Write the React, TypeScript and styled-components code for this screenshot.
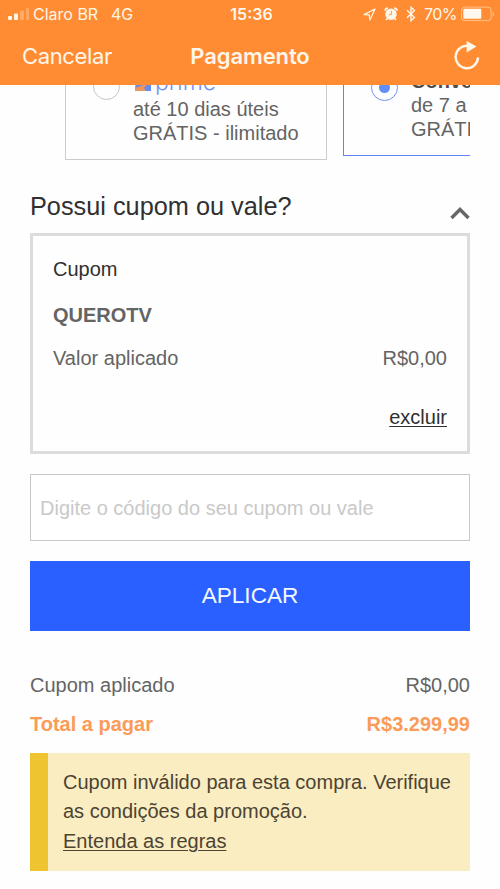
import React from "react";
import styled, { createGlobalStyle } from "styled-components";

const GlobalStyle = createGlobalStyle`
  * { box-sizing: border-box; }
  body {
    margin: 0;
    background: #fff;
    font-family: "Liberation Sans", Arial, sans-serif;
    font-size: 20px;
    color: #646464;
  }
`;

const Screen = styled.div`
  width: 500px;
  height: 889px;
  overflow: hidden;
  background: #fefefe;
`;

const Header = styled.header`
  height: 85px;
  background: #ff8c32;
  color: #fff6ea;
  font-family: Inter, sans-serif;
`;

const StatusBar = styled.div`
  height: 28px;
  padding: 0 5px 0 8px;
  display: grid;
  grid-template-columns: 1fr 44px 1fr;
  align-items: center;
  font-size: 16px;
  line-height: 28px;
`;

const Carrier = styled.div`
  display: flex;
  align-items: center;
`;

const CarrierName = styled.span`
  width: 65px;
  margin-left: 4px;
  white-space: nowrap;
`;

const Network = styled.span`
  margin-left: 13px;
`;

const Clock = styled.span`
  font-weight: 600;
  text-align: center;
  white-space: nowrap;
`;

const Indicators = styled.div`
  display: flex;
  align-items: center;
  justify-content: flex-end;
`;

const StatusIcons = styled.div`
  display: flex;
  align-items: center;
  gap: 8px;
`;

const Percent = styled.span`
  margin: 0 4px 0 8px;
  letter-spacing: -0.5px;
`;

const NavBar = styled.nav`
  height: 57px;
  padding: 0 20px 0 22px;
  display: grid;
  grid-template-columns: 1fr auto 1fr;
  align-items: center;
`;

const CancelButton = styled.button`
  padding: 0 0 2px;
  border: 0;
  background: none;
  color: inherit;
  font: 400 22px/28px Inter, sans-serif;
  letter-spacing: -0.35px;
  text-align: left;
`;

const Title = styled.h1`
  margin: 0 2px 0 0;
  padding-bottom: 2px;
  font-size: 22px;
  line-height: 28px;
  font-weight: 600;
  letter-spacing: -0.1px;
`;

const ReloadButton = styled.button`
  justify-self: end;
  display: flex;
  padding: 0 0 3px;
  border: 0;
  background: none;
`;

const Content = styled.main`
  padding: 0 30px;
`;

const ShippingRow = styled.div`
  height: 75px;
  padding-left: 35px;
  display: flex;
  align-items: flex-end;
  gap: 16px;
  overflow: hidden;
`;

const ShippingCard = styled.div<{ $selected?: boolean }>`
  flex: 0 0 262px;
  height: 120px;
  margin-bottom: ${(p) => (p.$selected ? 4 : 0)}px;
  padding: ${(p) => (p.$selected ? 27 : 26)}px 0 0 27px;
  display: flex;
  align-items: flex-start;
  gap: 13px;
  border: 1px solid ${(p) => (p.$selected ? "#5f86f5" : "#cbcbcb")};
`;

const Radio = styled.span<{ $selected?: boolean }>`
  flex: none;
  width: 27px;
  height: 27px;
  margin-top: ${(p) => (p.$selected ? 10 : 6)}px;
  display: flex;
  align-items: center;
  justify-content: center;
  border-radius: 50%;
  border: 1px solid ${(p) => (p.$selected ? "#7591ee" : "#c5c5c5")};
  &::after {
    content: "";
    width: 11px;
    height: 11px;
    border-radius: 50%;
    background: ${(p) => (p.$selected ? "#648ef7" : "transparent")};
  }
`;

const ShippingText = styled.div`
  line-height: 24px;
  white-space: nowrap;
`;

const PrimeName = styled.div`
  height: 30px;
  padding-left: 2px;
  display: flex;
  align-items: center;
  gap: 4px;
  color: #7590f0;
  font: 300 23px/30px Inter, sans-serif;
`;

const ServiceName = styled.div`
  height: 29px;
  font-weight: 700;
  color: #4d4d4d;
  line-height: 34px;
`;

const SectionHeader = styled.div`
  height: 73px;
  padding-top: 31px;
  display: flex;
  justify-content: space-between;
`;

const SectionTitle = styled.h2`
  margin: 0;
  font-size: 25.3px;
  line-height: 30px;
  font-weight: 400;
  color: #303030;
`;

const Chevron = styled.svg`
  margin-top: 15px;
`;

const CouponCard = styled.section`
  height: 221px;
  padding: 21px 20px 0;
  border: 3px solid #dcdcdc;
  line-height: 24px;
`;

const CouponLabel = styled.div`
  color: #303030;
`;

const CouponCode = styled.div`
  margin-top: 22px;
  font-weight: 700;
`;

const Row = styled.div<{ $top?: number; $total?: boolean }>`
  margin-top: ${(p) => p.$top ?? 0}px;
  display: flex;
  justify-content: space-between;
  line-height: 24px;
  font-weight: ${(p) => (p.$total ? 700 : 400)};
  color: ${(p) => (p.$total ? "#fa9b59" : "inherit")};
`;

const RemoveLink = styled.a`
  display: block;
  margin-top: 35px;
  text-align: right;
  color: #303030;
  text-decoration: underline;
  text-decoration-thickness: 1px;
  text-underline-offset: 2px;
`;

const CodeInput = styled.input`
  display: block;
  width: 100%;
  height: 67px;
  margin: 20px 0;
  padding: 2px 9px 0;
  border: 1px solid #c8c8c8;
  border-radius: 0;
  background: #fff;
  font: 400 20px "Liberation Sans", Arial, sans-serif;
  &::placeholder { color: #c9c9c9; opacity: 1; }
`;

const ApplyButton = styled.button`
  display: block;
  width: 100%;
  height: 70px;
  padding: 0;
  border: 0;
  background: #2a60ff;
  color: #f4f8ff;
  font: 400 22.6px "Liberation Sans", Arial, sans-serif;
`;

const Notice = styled.aside`
  height: 118px;
  margin-top: 17px;
  padding: 15px 0 0 15px;
  border-left: 18px solid #eec531;
  background: #faedc1;
  color: #4c4333;
  line-height: 29.4px;
  white-space: nowrap;
`;

const RulesLink = styled.a`
  color: inherit;
  text-decoration: underline;
  text-decoration-thickness: 1px;
  text-underline-offset: 2px;
`;

const SignalIcon = () => (
  <svg width="21" height="14" viewBox="0 0 21 14" fill="#fff6ea">
    <rect y="9" width="4" height="4" rx="1" />
    <rect x="6" y="6.5" width="4" height="6.5" rx="1" />
    <rect x="12" y="3.5" width="4" height="9.5" rx="1" opacity=".28" />
    <rect x="18" y="1" width="3" height="12" rx="1" opacity=".28" />
  </svg>
);

const LocationIcon = () => (
  <svg width="13" height="13" viewBox="0 0 13 13" fill="none" stroke="#fff6ea" strokeWidth="1.2" strokeLinejoin="round">
    <path d="M12 1 1 6.6l5.2.2.7 5.2z" />
  </svg>
);

const AlarmIcon = () => (
  <svg width="14" height="14" viewBox="0 0 14 14" fill="none">
    <circle cx="7" cy="7.3" r="5.7" fill="#fff6ea" />
    <path d="M1 3.7A3 3 0 0 1 4 1.2M13 3.7A3 3 0 0 0 10 1.2M3.3 11.5l-1.2 1.4M10.7 11.5l1.2 1.4" stroke="#fff6ea" strokeWidth="1.8" />
    <path d="M7.4 4v3.7H4.8" stroke="#ff9d50" strokeWidth="1" />
  </svg>
);

const BluetoothIcon = () => (
  <svg width="10" height="16" viewBox="0 0 10 16" fill="none" stroke="#fff6ea" strokeWidth="1.4">
    <path d="m1 4.2 7.5 7.2L5 14.7V1.3l3.5 3.3L1 11.8" />
  </svg>
);

const BatteryIcon = () => (
  <svg width="34" height="16" viewBox="0 0 34 16" fill="none">
    <rect x=".6" y="1.1" width="29.5" height="13.5" rx="3" stroke="#ffc38c" strokeWidth="1" />
    <rect x="2.3" y="2.8" width="18" height="10" rx="1" fill="#fff8ee" />
    <path d="M31.7 5.5c1.8 1 1.8 4 0 5z" fill="#ffc38c" />
  </svg>
);

const ReloadIcon = () => (
  <svg width="26" height="30" viewBox="0 0 26 30" fill="none">
    <path d="M14.2 5.9A11.2 11.2 0 1 0 24 17.4" stroke="#fff6ea" strokeWidth="2.4" />
    <path d="M12.7 1 22.5 6.5l-9.8 6z" fill="#fff6ea" />
  </svg>
);

const PrimeIcon = () => (
  <svg width="16" height="17" viewBox="0 0 16 17">
    <path d="M1 0h15v17H0z" fill="#668bef" />
    <path d="M0 14 13 9.5 9 14l2 3H0z" fill="#ed965b" />
  </svg>
);

export default function App() {
  return (
    <Screen>
      <GlobalStyle />
      <Header>
        <StatusBar>
          <Carrier>
            <SignalIcon />
            <CarrierName>Claro BR</CarrierName>
            <Network>4G</Network>
          </Carrier>
          <Clock>15:36</Clock>
          <Indicators>
            <StatusIcons>
              <LocationIcon />
              <AlarmIcon />
              <BluetoothIcon />
            </StatusIcons>
            <Percent>70%</Percent>
            <BatteryIcon />
          </Indicators>
        </StatusBar>
        <NavBar>
          <CancelButton>Cancelar</CancelButton>
          <Title>Pagamento</Title>
          <ReloadButton aria-label="Recarregar">
            <ReloadIcon />
          </ReloadButton>
        </NavBar>
      </Header>
      <Content>
        <ShippingRow>
          <ShippingCard>
            <Radio />
            <ShippingText>
              <PrimeName><PrimeIcon />prime</PrimeName>
              até 10 dias úteis<br />GRÁTIS - ilimitado
            </ShippingText>
          </ShippingCard>
          <ShippingCard $selected>
            <Radio $selected />
            <ShippingText>
              <ServiceName>Convencional</ServiceName>
              de 7 a 10 dias úteis<br />GRÁTIS
            </ShippingText>
          </ShippingCard>
        </ShippingRow>
        <SectionHeader>
          <SectionTitle>Possui cupom ou vale?</SectionTitle>
          <Chevron width="20" height="14" viewBox="0 0 20 14" fill="none" stroke="#666" strokeWidth="3.4">
            <path d="m1.5 12 8.5-8.5 8.5 8.5" />
          </Chevron>
        </SectionHeader>
        <CouponCard>
          <CouponLabel>Cupom</CouponLabel>
          <CouponCode>QUEROTV</CouponCode>
          <Row $top={19}>
            <span>Valor aplicado</span>
            <span>R$0,00</span>
          </Row>
          <RemoveLink>excluir</RemoveLink>
        </CouponCard>
        <CodeInput placeholder="Digite o código do seu cupom ou vale" />
        <ApplyButton>APLICAR</ApplyButton>
        <Row $top={42}>
          <span>Cupom aplicado</span>
          <span>R$0,00</span>
        </Row>
        <Row $top={15} $total>
          <span>Total a pagar</span>
          <span>R$3.299,99</span>
        </Row>
        <Notice>
          Cupom inválido para esta compra. Verifique<br />
          as condições da promoção.<br />
          <RulesLink>Entenda as regras</RulesLink>
        </Notice>
      </Content>
    </Screen>
  );
}
